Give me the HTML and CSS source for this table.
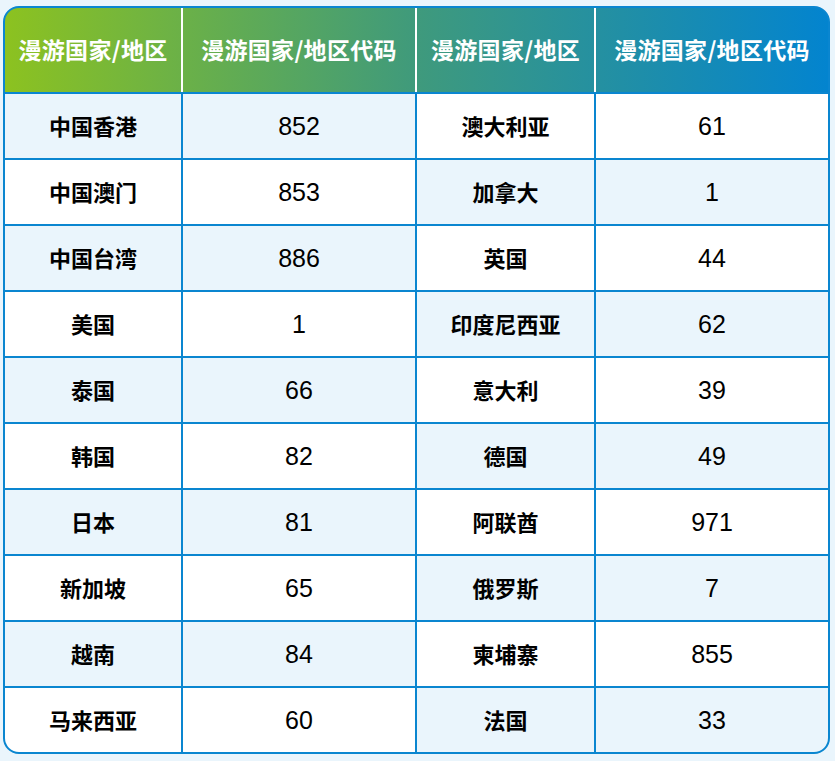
FILE: index.html
```html
<!DOCTYPE html>
<html lang="zh-CN">
<head>
<meta charset="utf-8">
<title>漫游国家/地区代码</title>
<link rel="stylesheet" href="styles.css">
</head>
<body>
<div class="wrap">
  <div class="head">
    <div class="hc">漫游国家/地区</div>
    <div class="hc sep">漫游国家/地区代码</div>
    <div class="hc sep">漫游国家/地区</div>
    <div class="hc sep">漫游国家/地区代码</div>
  </div>
  <div class="body">
    <div class="c a name">中国香港</div><div class="c a num">852</div><div class="c name">澳大利亚</div><div class="c num">61</div>
    <div class="c name">中国澳门</div><div class="c num">853</div><div class="c a name">加拿大</div><div class="c a num">1</div>
    <div class="c a name">中国台湾</div><div class="c a num">886</div><div class="c name">英国</div><div class="c num">44</div>
    <div class="c name">美国</div><div class="c num">1</div><div class="c a name">印度尼西亚</div><div class="c a num">62</div>
    <div class="c a name">泰国</div><div class="c a num">66</div><div class="c name">意大利</div><div class="c num">39</div>
    <div class="c name">韩国</div><div class="c num">82</div><div class="c a name">德国</div><div class="c a num">49</div>
    <div class="c a name">日本</div><div class="c a num">81</div><div class="c name">阿联酋</div><div class="c num">971</div>
    <div class="c name">新加坡</div><div class="c num">65</div><div class="c a name">俄罗斯</div><div class="c a num">7</div>
    <div class="c a name">越南</div><div class="c a num">84</div><div class="c name">柬埔寨</div><div class="c num">855</div>
    <div class="c name">马来西亚</div><div class="c num">60</div><div class="c a name">法国</div><div class="c a num">33</div>
  </div>
</div>
</body>
</html>
```

FILE: styles.css
```css
html, body {
  margin: 0;
  padding: 0;
  background: #eaf5fc;
}
body {
  padding: 6px 0 0 3px;
  font-family: "Noto Sans CJK SC", "Liberation Sans", sans-serif;
}
.wrap {
  width: 823px;
  border: 2px solid #0a86d0;
  border-radius: 16px;
  overflow: hidden;
  background: #0a86d0;
}
.head {
  display: grid;
  grid-template-columns: 176px 234px 179px 234px;
  height: 84px;
  background: linear-gradient(90deg, #8cc220 0%, #3f9a7c 50%, #0384cf 100%);
  border-bottom: 2px solid #0a86d0;
}
.hc {
  display: flex;
  align-items: center;
  justify-content: center;
  color: #fff;
  font-weight: 700;
  font-size: 23px;
  line-height: 1;
  letter-spacing: 0.3px;
  padding-bottom: 2px;
}
.sep {
  border-left: 2px solid #fff;
}
.body {
  display: grid;
  grid-template-columns: 176px 232px 177px 232px;
  grid-auto-rows: 64px;
  gap: 2px;
  background: #0a86d0;
}
.c {
  display: flex;
  align-items: center;
  justify-content: center;
  background: #fff;
  color: #000;
  line-height: 1;
}
.c.a {
  background: #eaf5fc;
}
.name {
  font-weight: 700;
  font-size: 22px;
  padding-bottom: 2px;
}
.num {
  font-family: "Liberation Sans", Arial, sans-serif;
  font-size: 25px;
}
```
